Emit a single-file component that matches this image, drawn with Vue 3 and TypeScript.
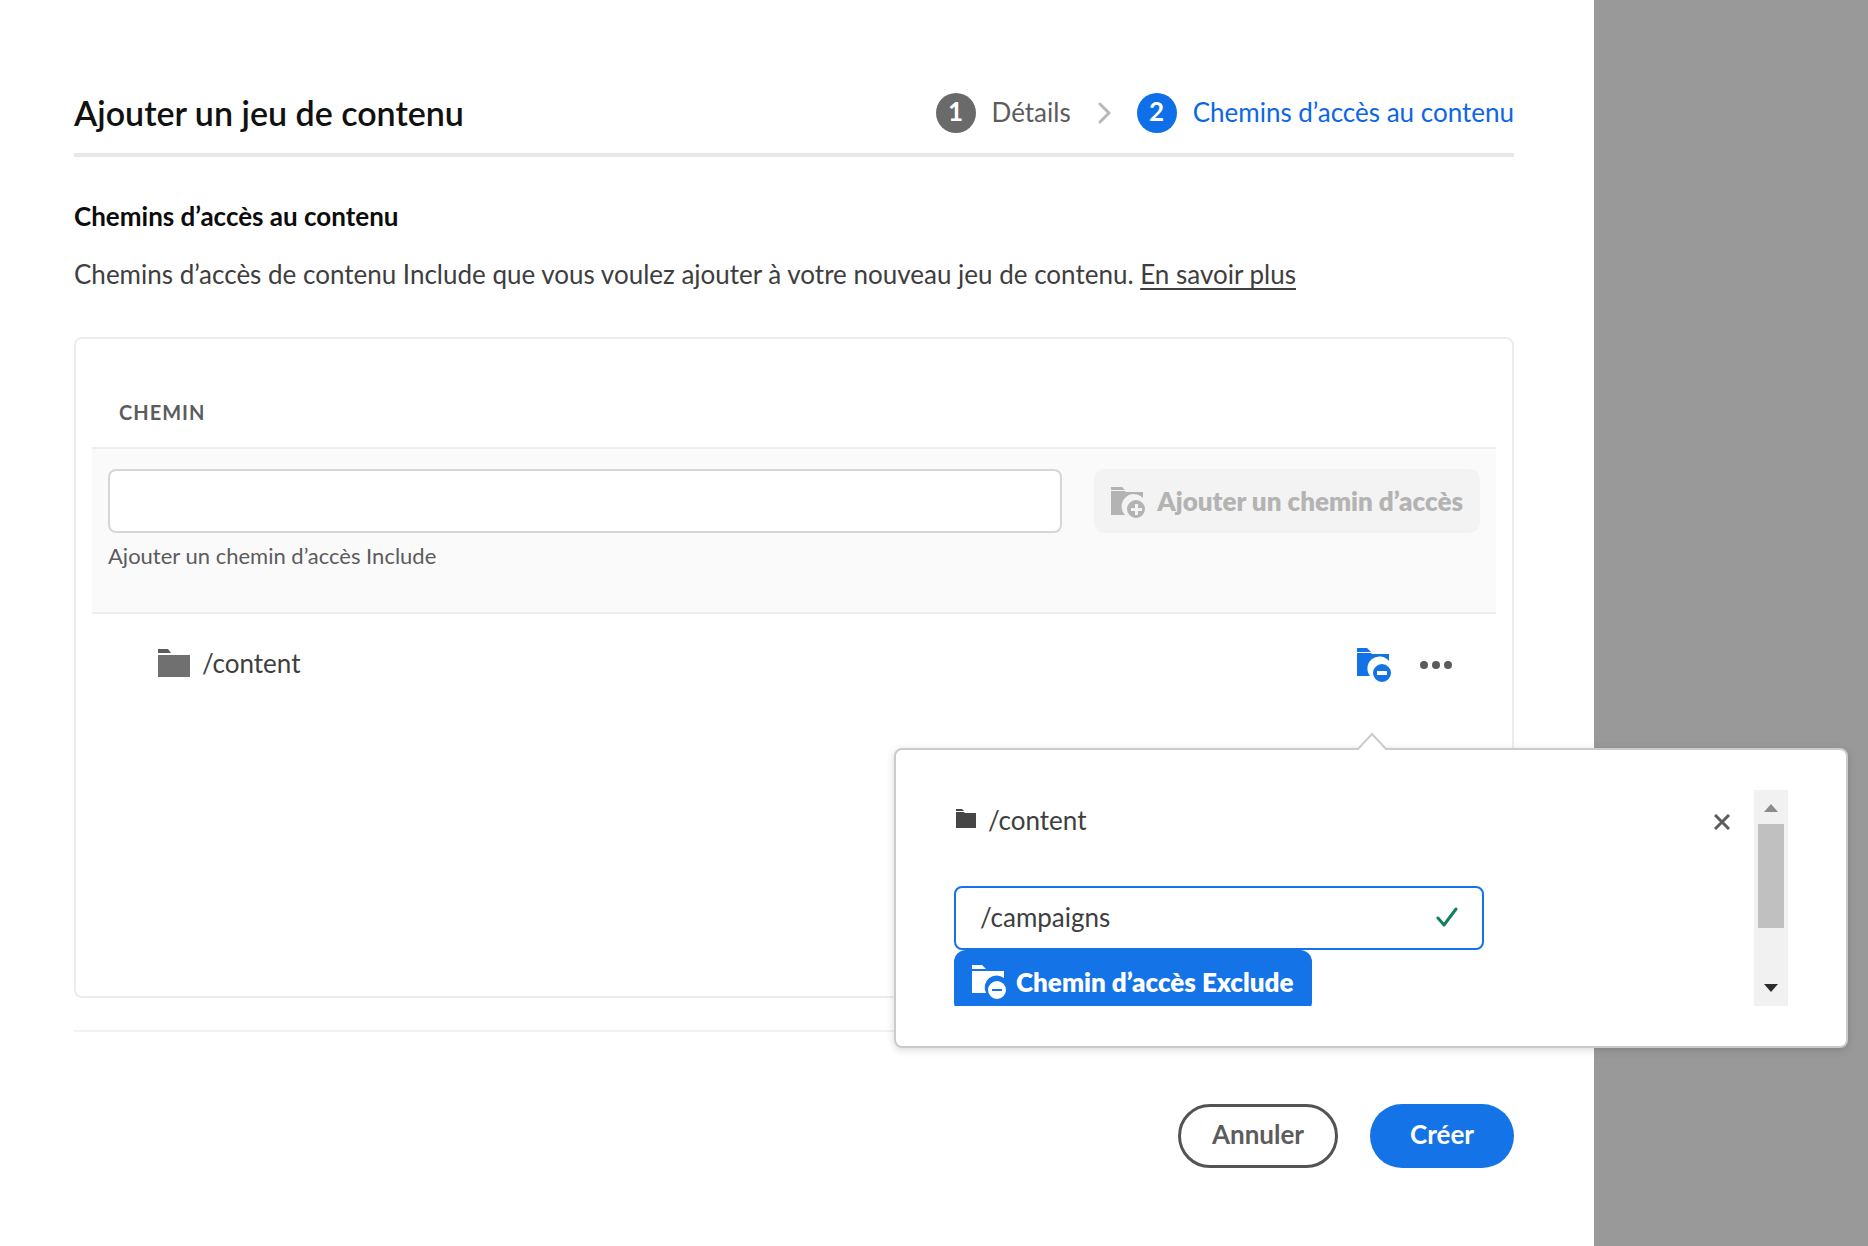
<script setup lang="ts">
import { ref } from 'vue'

const newPath = ref('')
const excludePath = ref('/campaigns')
const steps = [
  { number: 1, label: 'Détails', current: false },
  { number: 2, label: 'Chemins d’accès au contenu', current: true },
]
</script>

<template>
  <div class="page">
    <main class="panel">
      <header class="head">
        <h1>Ajouter un jeu de contenu</h1>
        <ol class="steps">
          <li v-for="step in steps" :key="step.number" class="step" :class="{ current: step.current }">
            <svg v-if="step.number > 1" class="chevron" width="14" height="22" viewBox="0 0 14 22" aria-hidden="true">
              <path d="M3 2l9 9-9 9" fill="none" stroke="#b8b8b8" stroke-width="3" stroke-linecap="round" stroke-linejoin="round" />
            </svg>
            <span class="badge">{{ step.number }}</span>
            <span class="step-label">{{ step.label }}</span>
          </li>
        </ol>
      </header>

      <h2>Chemins d’accès au contenu</h2>
      <p class="intro">
        Chemins d’accès de contenu Include que vous voulez ajouter à votre nouveau jeu de contenu.
        <a href="#">En savoir plus</a>
      </p>

      <section class="card">
        <h3>CHEMIN</h3>
        <div class="adder">
          <div class="field">
            <input id="include-path" v-model="newPath" type="text" />
            <label for="include-path">Ajouter un chemin d’accès Include</label>
          </div>
          <button class="add" type="button" disabled>
            <svg width="36" height="34" viewBox="0 -3 36 34" fill="currentColor" aria-hidden="true">
              <path d="M0 0h11l3 3H0z" />
              <path d="M0 4h14l1 1h17v6a12 12 0 0 0-18 17H0z" />
              <path fill-rule="evenodd" d="M25 13a9 9 0 1 0 0 18 9 9 0 0 0 0-18zM24 17h3v4h4v3h-4v4h-3v-4h-4v-3h4z" />
            </svg>
            <span>Ajouter un chemin d’accès</span>
          </button>
        </div>

        <div class="row">
          <div class="entry">
            <svg width="32" height="28" viewBox="0 0 32 28" aria-hidden="true">
              <path d="M0 0h10l3 4H0z" fill="#5c5c5c" />
              <path d="M0 6h32v22H0z" fill="#707070" />
            </svg>
            <span>/content</span>
          </div>
          <div class="anchor">
            <button class="icon blue" type="button" aria-label="Exclure un chemin d’accès">
              <svg width="34" height="34" viewBox="0 0 34 34" fill="currentColor" aria-hidden="true">
                <path d="M0 0h10l4 4H0z" />
                <path d="M0 5h14l1 1h17v7a12 12 0 0 0-19 15H0z" />
                <path fill-rule="evenodd" d="M25 16a9 9 0 1 0 0 18 9 9 0 0 0 0-18zM20 23h10v4H20z" />
              </svg>
            </button>

            <div class="popover" role="dialog" aria-label="/content">
              <svg class="tip" width="32" height="18" viewBox="0 0 32 18" aria-hidden="true">
                <path d="M1 18L16 2l15 16z" fill="#fff" />
                <path d="M0 17h2L16 2l14 15h2" fill="none" stroke="#cbcbcb" stroke-width="2" />
              </svg>
              <div class="scroller">
                <div class="pop-head">
                  <div class="pop-title">
                    <svg width="20" height="22" viewBox="0 0 20 22" aria-hidden="true">
                      <path d="M0 0h6l2 2H0zM0 3h8l1 1h11v15H0z" fill="#464646" />
                    </svg>
                    <span>/content</span>
                  </div>
                  <button class="icon" type="button" aria-label="Fermer">
                    <svg width="16" height="16" viewBox="0 0 16 16" aria-hidden="true">
                      <path d="M1 1l14 14M15 1L1 15" stroke="#5c5c5c" stroke-width="3" />
                    </svg>
                  </button>
                </div>
                <div class="exclude-field">
                  <input v-model="excludePath" type="text" aria-label="Chemin d’accès à exclure" />
                  <svg width="22" height="20" viewBox="0 0 22 20" aria-hidden="true">
                    <path d="M2 11l6 7L20 2" fill="none" stroke="#12805c" stroke-width="3" stroke-linecap="round" stroke-linejoin="round" />
                  </svg>
                </div>
                <button class="exclude" type="button">
                  <svg width="34" height="34" viewBox="0 0 34 34" fill="currentColor" aria-hidden="true">
                    <path d="M0 0h10l4 4H0z" />
                    <path d="M0 6h32v7a12 12 0 0 0-18 15H0z" />
                    <path fill-rule="evenodd" d="M25 16a9 9 0 1 0 0 18 9 9 0 0 0 0-18zM20 24h10v2H20z" />
                  </svg>
                  <span>Chemin d’accès Exclude</span>
                </button>
              </div>
              <div class="scrollbar" aria-hidden="true">
                <svg width="14" height="8" viewBox="0 0 14 8"><path d="M0 8l7-8 7 8z" fill="#8b8b8b" /></svg>
                <div class="track"><div class="thumb"></div></div>
                <svg width="14" height="8" viewBox="0 0 14 8"><path d="M0 0l7 8 7-8z" fill="#2c2c2c" /></svg>
              </div>
            </div>
          </div>
          <button class="icon" type="button" aria-label="Plus d’actions">
            <svg width="34" height="10" viewBox="0 0 34 10" fill="#5c5c5c" aria-hidden="true">
              <circle cx="5" cy="5" r="4" /><circle cx="17" cy="5" r="4" /><circle cx="29" cy="5" r="4" />
            </svg>
          </button>
        </div>
      </section>

      <footer class="foot">
        <button class="cancel" type="button">Annuler</button>
        <button class="create" type="button">Créer</button>
      </footer>
    </main>
    <div class="backdrop"></div>
  </div>
</template>

<style>
body {
  margin: 0;
  background: #fff;
}
</style>

<style scoped>
.page {
  display: flex;
  min-height: 100vh;
  font-family: Lato, "Liberation Sans", sans-serif;
  font-size: 26px;
  line-height: 32px;
  color: #3e3e3e;
}
.page * {
  box-sizing: border-box;
}
.panel {
  flex: 1;
  display: flex;
  flex-direction: column;
  padding: 78px 80px 78px 74px;
}
.backdrop {
  width: 274px;
  background: #999;
}
button,
input {
  margin: 0;
  padding: 0;
  border: 0;
  font: inherit;
  color: inherit;
  background: none;
}
h1,
h2,
h3,
p,
ol {
  margin: 0;
  padding: 0;
}
.head {
  display: flex;
  align-items: center;
  justify-content: space-between;
  height: 79px;
  padding-bottom: 6px;
  border-bottom: 4px solid #e8e8e8;
}
h1 {
  font-size: 34px;
  line-height: 40px;
  font-weight: 600;
  color: #111;
}
.steps {
  display: flex;
  list-style: none;
}
.step {
  display: flex;
  align-items: center;
  gap: 16px;
  color: #5c5c5c;
}
.step.current {
  color: #0d66e5;
}
.step-label {
  padding-bottom: 2px;
}
.chevron {
  margin: 0 10px 0 26px;
}
.badge {
  width: 40px;
  height: 40px;
  border-radius: 50%;
  background: #6a6a6a;
  color: #fff;
  font-weight: 700;
  line-height: 36px;
  text-align: center;
}
.current .badge {
  background: #0f6fe8;
}
h2 {
  margin-top: 43px;
  font-size: 26px;
  font-weight: 700;
  color: #0c0c0c;
}
.intro {
  margin-top: 26px;
}
.intro a {
  color: inherit;
  text-decoration-thickness: 2px;
  text-underline-offset: 4px;
}
.card {
  flex: 1;
  margin-top: 47px;
  padding: 57px 16px 0;
  border: 2px solid #ececec;
  border-radius: 8px;
}
h3 {
  padding-left: 27px;
  font-size: 20px;
  font-weight: 700;
  letter-spacing: 1px;
  color: #5c5c5c;
}
.adder {
  display: flex;
  gap: 32px;
  height: 167px;
  margin-top: 19px;
  padding: 20px 16px;
  border: solid #eee;
  border-width: 2px 0;
  background: #fafafa;
}
.field {
  flex: 1;
}
.field input {
  display: block;
  width: 100%;
  height: 64px;
  padding: 0 24px;
  border: 2px solid #d6d6d6;
  border-radius: 8px;
  background: #fff;
}
.field label {
  display: block;
  margin-top: 7px;
  font-size: 22px;
  color: #5c5c5c;
}
.add {
  display: flex;
  align-items: center;
  gap: 10px;
  height: 64px;
  padding: 0 17px;
  border-radius: 10px;
  background: #f3f3f3;
  color: #b3b3b3;
  font-weight: 800;
}
.row {
  display: flex;
  align-items: center;
  height: 102px;
  padding: 0 43px 0 66px;
}
.entry {
  flex: 1;
  display: flex;
  align-items: center;
  gap: 12px;
  padding-bottom: 5px;
}
.anchor {
  position: relative;
  margin-right: 28px;
}
.icon {
  display: block;
  cursor: pointer;
}
.icon svg {
  display: block;
}
.blue {
  color: #1373e6;
}
.popover {
  position: absolute;
  z-index: 1;
  top: 100px;
  right: -457px;
  display: flex;
  width: 954px;
  height: 300px;
  padding: 40px 58px;
  border: 2px solid #cbcbcb;
  border-radius: 8px;
  background: #fff;
  box-shadow: 0 2px 8px rgba(0, 0, 0, 0.15);
}
.tip {
  position: absolute;
  top: -18px;
  right: 458px;
}
.scroller {
  flex: 1;
  height: 216px;
  overflow: hidden;
}
.pop-head {
  display: flex;
  align-items: center;
  justify-content: space-between;
  height: 64px;
  padding: 0 24px 0 2px;
}
.pop-title {
  display: flex;
  align-items: center;
  gap: 12px;
  padding-bottom: 4px;
}
.exclude-field {
  display: flex;
  align-items: center;
  width: 530px;
  height: 64px;
  margin-top: 32px;
  padding: 0 24px 2px;
  border: 2px solid #1473e6;
  border-radius: 8px;
}
.exclude-field input {
  flex: 1;
  outline: 0;
}
.exclude {
  display: flex;
  align-items: center;
  gap: 10px;
  height: 64px;
  padding: 0 18px;
  border-radius: 12px;
  background: #1473e6;
  color: #fff;
  font-weight: 800;
}
.scrollbar {
  display: flex;
  flex-direction: column;
  align-items: center;
  width: 34px;
  height: 216px;
  padding: 14px 4px;
  background: #f1f1f1;
}
.track {
  flex: 1;
  width: 100%;
  padding: 12px 0;
}
.thumb {
  height: 104px;
  background: #c0c0c0;
}
.foot {
  display: flex;
  justify-content: flex-end;
  gap: 32px;
  margin-top: 32px;
  padding-top: 72px;
  border-top: 2px solid #f1f1f1;
}
.foot button {
  height: 64px;
  padding: 0 31px 4px;
  border-radius: 32px;
  font-weight: 700;
}
.foot .cancel {
  border: 3px solid #535353;
  color: #5c5c5c;
}
.foot .create {
  padding: 0 40px 4px;
  background: #1473e6;
  color: #fff;
}
</style>
